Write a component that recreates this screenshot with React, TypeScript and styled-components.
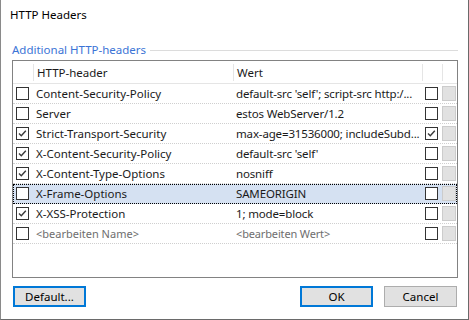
import { type FC } from "react";
import styled, { createGlobalStyle } from "styled-components";

const GlobalStyle = createGlobalStyle`
  html, body {
    margin: 0;
    padding: 0;
    background: #ffffff;
  }
  body {
    font-family: "Noto Sans", "Liberation Sans", sans-serif;
    font-size: 11.5px;
    color: #000000;
  }
`;

const Window = styled.div`
  box-sizing: border-box;
  width: 469px;
  height: 320px;
  display: flex;
  flex-direction: column;
  background: #ffffff;
  border-left: 1px solid #8a8a8a;
  border-right: 1px solid #6a6a6a;
  border-bottom: 1px solid #6a6a6a;
`;

const TitleBar = styled.div`
  height: 30px;
  padding: 7px 0 0 9px;
  box-sizing: border-box;
  font-size: 11.5px;
  line-height: 16px;
  color: #000000;
`;

const Legend = styled.div`
  display: flex;
  align-items: center;
  gap: 4px;
  height: 16px;
  margin: 12px 10px 0 11px;
  color: #3b74d6;
  line-height: 16px;
`;

const LegendLine = styled.div`
  flex: 1;
  height: 1px;
  background: #dcdcdc;
`;

const ListBox = styled.div`
  box-sizing: border-box;
  margin: 2px 0 0 11px;
  width: 446px;
  height: 218px;
  border: 1px solid #828282;
  background: #ffffff;
  overflow: hidden;
`;

const columns = "20px 200px 189px 20px 15px";

const HeaderRow = styled.div`
  display: grid;
  grid-template-columns: ${columns};
  height: 23px;
  box-sizing: border-box;
  border-bottom: 1px solid #e5e5e5;
`;

const HeaderCell = styled.div<{ $first?: boolean }>`
  display: flex;
  align-items: center;
  padding-left: 3px;
  border-left: ${(p) => (p.$first ? "none" : "1px solid #e5e5e5")};
  margin: 3px 0 2px;
  white-space: nowrap;
  color: #1a1a1a;
`;

const Row = styled.div<{ $selected?: boolean }>`
  display: grid;
  grid-template-columns: ${columns};
  height: 20px;
  box-sizing: border-box;
  align-items: center;
  border-bottom: 1px dotted #cfcfcf;
  background: ${(p) => (p.$selected ? "#d5e1f2" : "transparent")};
  outline: ${(p) => (p.$selected ? "1px dotted #000000" : "none")};
  outline-offset: -1px;
`;

const Cell = styled.div<{ $muted?: boolean; $tight?: boolean }>`
  padding-left: 3px;
  white-space: nowrap;
  overflow: hidden;
  color: ${(p) => (p.$muted ? "#6e6e6e" : "#1a1a1a")};
  font-size: ${(p) => (p.$muted ? "11px" : "11.5px")};
  letter-spacing: ${(p) => (p.$tight ? "-0.15px" : "normal")};
  line-height: 16px;
`;

const BoxCell = styled.div<{ $flush?: boolean }>`
  display: flex;
  align-items: center;
  padding-left: ${(p) => (p.$flush ? "0" : "3px")};
`;

const CheckBox = styled.div`
  box-sizing: border-box;
  width: 13px;
  height: 13px;
  border: 1px solid #333333;
  background: #ffffff;
  display: flex;
  align-items: center;
  justify-content: center;
`;

const DisabledBox = styled.div`
  box-sizing: border-box;
  width: 14px;
  height: 15px;
  border: 1px solid #cccccc;
  background: #e1e1e1;
`;

const ButtonRow = styled.div`
  display: flex;
  align-items: center;
  margin: 8px 11px 0 12px;
  gap: 11px;
`;

const Button = styled.button<{ $focused?: boolean }>`
  box-sizing: border-box;
  width: 73px;
  height: 21px;
  padding: 0;
  font-family: inherit;
  font-size: 11.5px;
  color: #000000;
  background: #e1e1e1;
  border: ${(p) => (p.$focused ? "2px solid #0078d7" : "1px solid #adadad")};
  &:first-child {
    margin-right: auto;
  }
`;

const Check: FC<{ checked?: boolean }> = ({ checked }) => (
  <CheckBox>
    {checked && (
      <svg width="11" height="11" viewBox="0 0 11 11">
        <path d="M2 5.5 L4.3 7.8 L8.8 2.8" fill="none" stroke="#3a3a3a" strokeWidth="1.4" />
      </svg>
    )}
  </CheckBox>
);

type Header = {
  name: string;
  value: string;
  enabled: boolean;
  extra: boolean;
  selected?: boolean;
  placeholder?: boolean;
};

const headers: Header[] = [
  { name: "Content-Security-Policy", value: "default-src 'self'; script-src http:/...", enabled: false, extra: false },
  { name: "Server", value: "estos WebServer/1.2", enabled: false, extra: false },
  { name: "Strict-Transport-Security", value: "max-age=31536000; includeSubd...", enabled: true, extra: true },
  { name: "X-Content-Security-Policy", value: "default-src 'self'", enabled: true, extra: false },
  { name: "X-Content-Type-Options", value: "nosniff", enabled: true, extra: false },
  { name: "X-Frame-Options", value: "SAMEORIGIN", enabled: false, extra: false, selected: true },
  { name: "X-XSS-Protection", value: "1; mode=block", enabled: true, extra: false },
  { name: "<bearbeiten Name>", value: "<bearbeiten Wert>", enabled: false, extra: false, placeholder: true },
];

const App: FC = function () {
  return (
    <>
      <GlobalStyle />
      <Window>
        <TitleBar>HTTP Headers</TitleBar>
        <Legend>
          Additional HTTP-headers
          <LegendLine />
        </Legend>
        <ListBox>
          <HeaderRow>
            <HeaderCell $first />
            <HeaderCell>HTTP-header</HeaderCell>
            <HeaderCell>Wert</HeaderCell>
            <HeaderCell />
            <HeaderCell />
          </HeaderRow>
          {headers.map((h) => (
            <Row key={h.name} $selected={h.selected}>
              <BoxCell>
                <Check checked={h.enabled} />
              </BoxCell>
              <Cell $muted={h.placeholder}>{h.name}</Cell>
              <Cell $muted={h.placeholder} $tight>
                {h.value}
              </Cell>
              <BoxCell>
                <Check checked={h.extra} />
              </BoxCell>
              <BoxCell $flush>
                <DisabledBox />
              </BoxCell>
            </Row>
          ))}
        </ListBox>
        <ButtonRow>
          <Button $focused>Default...</Button>
          <Button $focused>OK</Button>
          <Button>Cancel</Button>
        </ButtonRow>
      </Window>
    </>
  );
};

export default App;
